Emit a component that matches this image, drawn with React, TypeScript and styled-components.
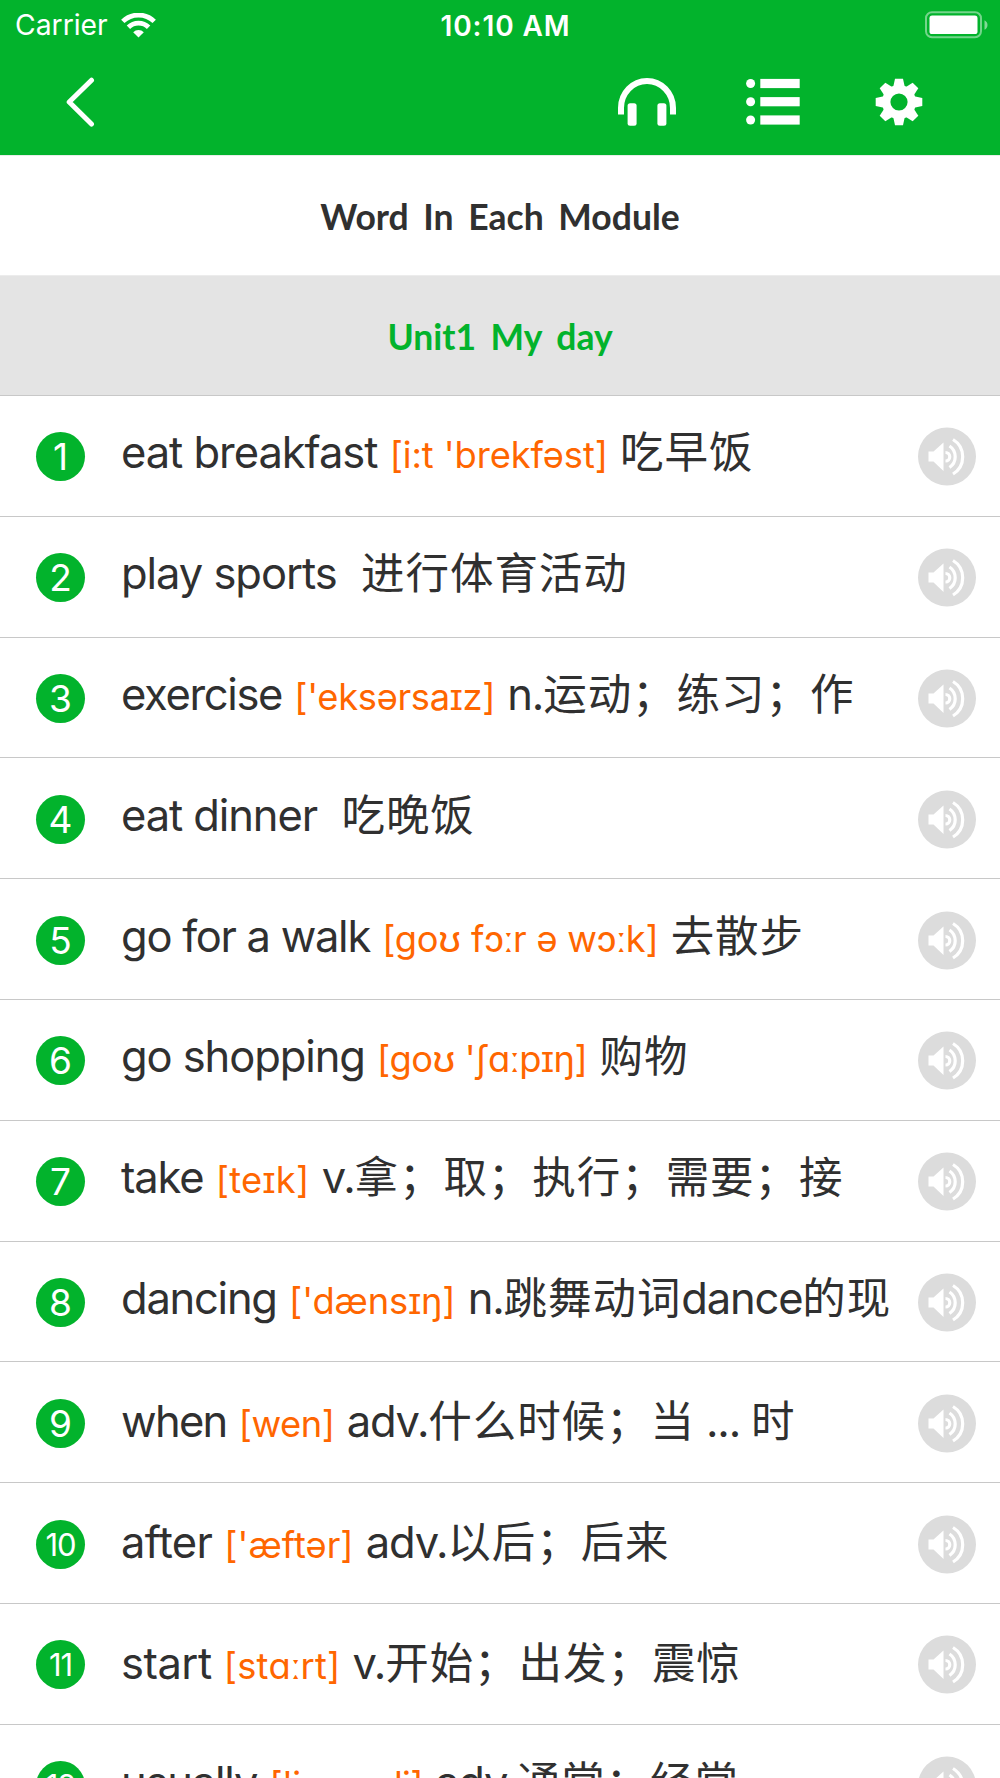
import React from 'react';
import styled, { createGlobalStyle } from 'styled-components';

interface Word {
    en: string
    enGap: number
    ipa?: string
    ipaGap?: number
    cn: string
    shift?: number
}

const words: Word[] = [
    { en: 'eat breakfast', enGap: -1.05, ipa: "[i:t 'brekfəst]", ipaGap: -0.1, cn: '吃早饭' },
    { en: 'play sports', enGap: -1.05, cn: '进行体育活动', shift: -3 },
    { en: 'exercise', enGap: -1.35, ipa: "['eksərsaɪz]", ipaGap: -0.3, cn: 'n.运动；练习；作' },
    { en: 'eat dinner', enGap: -1.1, cn: '吃晚饭', shift: -3 },
    { en: 'go for a walk', enGap: -1.28, ipa: '[goʊ fɔːr ə wɔːk]', ipaGap: -0.25, cn: '去散步' },
    { en: 'go shopping', enGap: -1.1, ipa: "[goʊ 'ʃɑːpɪŋ]", ipaGap: -0.45, cn: '购物' },
    { en: 'take', enGap: -1.15, ipa: '[teɪk]', ipaGap: 0.3, cn: 'v.拿；取；执行；需要；接' },
    { en: 'dancing', enGap: -1.25, ipa: "['dænsɪŋ]", ipaGap: -0.1, cn: 'n.跳舞动词dance的现' },
    { en: 'when', enGap: -1.7, ipa: '[wen]', ipaGap: -0.5, cn: 'adv.什么时候；当 ... 时', shift: 4 },
    { en: 'after', enGap: -0.7, ipa: "['æftər]", ipaGap: 0, cn: 'adv.以后；后来', shift: 4 },
    { en: 'start', enGap: -0.5, ipa: '[stɑːrt]', ipaGap: 0.1, cn: 'v.开始；出发；震惊', shift: 5 },
    { en: 'usually', enGap: -1.2, ipa: "['juːʒuəli]", ipaGap: -0.6, cn: 'adv.通常；经常', shift: 1 },
]

const GlobalStyle = createGlobalStyle`
  body {
    margin: 0;
    background-color: #ffffff;
    font-family: 'Inter', 'Noto Sans CJK SC', sans-serif;
    color: #303030;
  }
`

const Page = styled.div`
    width: 1000px;
    height: 1778px;
    overflow: hidden;
`

const Header = styled.div`
    height: 155px;
    background-color: #02b32c;
    color: #ffffff;
`

const StatusBar = styled.div`
    height: 50px;
    display: grid;
    grid-template-columns: 1fr auto 1fr;
    align-items: center;
    padding: 0 12px 0 15px;
    box-sizing: border-box;
    font-size: 28.3px;
`

const Carrier = styled.div`
    display: flex;
    align-items: center;
    gap: 13px;
`

const Clock = styled.div`
    font-weight: 600;
    font-size: 28px;
    letter-spacing: 0.9px;
    padding: 1px 0 0 8px;
`

const Battery = styled.svg`
    justify-self: end;
`

const NavBar = styled.div`
    height: 103px;
    display: flex;
    align-items: center;
    padding: 0 77px 0 66px;
`

const NavTools = styled.div`
    display: flex;
    align-items: center;
    gap: 69px;
    margin-left: auto;

    svg:last-child {
        margin-left: 6px;
    }
`

const Banner = styled.div<{ $unit?: boolean }>`
    height: 120px;
    display: flex;
    align-items: center;
    justify-content: center;
    box-sizing: border-box;
    border-top: 1px solid ${props => props.$unit ? '#ececec' : '#e6eee8'};
    background-color: ${props => props.$unit ? '#e4e4e4' : '#ffffff'};
    color: ${props => props.$unit ? '#02b32c' : '#303030'};
    font-family: 'Comic Sans MS', 'Chalkboard SE', 'Lato', sans-serif;
    font-size: 35.5px;
    font-weight: 700;
    letter-spacing: 0;
    word-spacing: 6px;
    padding-top: 2px;
`

const Row = styled.div`
    height: 120.8px;
    box-sizing: border-box;
    border-top: 1px solid #c8c8c8;
    display: flex;
    align-items: center;
    padding: 2px 24px 0 36px;
`

const Index = styled.div<{ $small: boolean }>`
    width: 49px;
    height: 49px;
    border-radius: 50%;
    background-color: #02b32c;
    color: #ffffff;
    display: flex;
    align-items: center;
    justify-content: center;
    font-size: ${props => props.$small ? '31px' : '37px'};
    letter-spacing: ${props => props.$small ? '-1px' : '0'};
`

const Line = styled.div<{ $shift?: number }>`
    flex: 1;
    margin-left: 36px;
    margin-top: ${props => -6 + (props.$shift || 0)}px;
    font-size: 43.5px;
    line-height: 60px;
    white-space: pre;
`

const Latin = styled.span<{ $gap: number }>`
    letter-spacing: ${props => props.$gap}px;
`

const Ipa = styled(Latin)`
    color: #ff6600;
    font-size: 36.3px;
`

const Cn = styled.span`
    letter-spacing: 0.95px;
`

const BackIcon = () => (
    <svg width="29" height="50" viewBox="0 0 29 50" fill="none" stroke="#fff" strokeWidth="5" strokeLinecap="round" strokeLinejoin="round">
        <path d="M25.5 3.2L3.2 25L25.5 47" />
    </svg>
)

const WifiIcon = () => (
    <svg width="35" height="25" viewBox="0 0 35 25" fill="none" stroke="#fff" strokeWidth="4.8">
        <path d="M1.8 8.4A22.5 22.5 0 0 1 33.2 8.4" />
        <path d="M7.4 14.2A14.4 14.4 0 0 1 27.6 14.2" />
        <path d="M17.5 24.5L12.2 19.3A7.5 7.5 0 0 1 22.8 19.3Z" fill="#fff" stroke="none" />
    </svg>
)

const BatteryIcon = () => (
    <Battery width="63" height="28" viewBox="0 0 63 28">
        <rect x="1" y="1.2" width="55" height="25" rx="6" fill="none" stroke="#fff" strokeOpacity="0.45" strokeWidth="2" />
        <rect x="4.5" y="4.6" width="48" height="18.4" rx="2.6" fill="#fff" />
        <path d="M59.5 9.2Q62.5 10.8 62.5 14T59.5 18.8Z" fill="#fff" fillOpacity="0.5" />
    </Battery>
)

const HeadphonesIcon = () => (
    <svg width="60" height="48" viewBox="0 0 60 48" fill="#fff">
        <path d="M4 36.5V30A26 27 0 0 1 56 30V36.5" fill="none" stroke="#fff" strokeWidth="6" />
        <rect x="10.6" y="25.3" width="9" height="22.4" rx="2.5" />
        <rect x="40.4" y="25.3" width="9" height="22.4" rx="2.5" />
    </svg>
)

const ListIcon = () => (
    <svg width="54" height="48" viewBox="0 0 54 48" fill="#fff">
        {[5.5, 23.7, 42].map(y => (
            <g key={y}>
                <circle cx="4.6" cy={y} r="4.5" />
                <rect x="14.3" y={y - 4.6} width="39.4" height="9.2" />
            </g>
        ))}
    </svg>
)

const GearIcon = () => (
    <svg width="48" height="48" viewBox="-24 -24 48 48">
        {[0, 45, 90, 135, 180, 225, 270, 315].map(a => (
            <path key={a} d="M-6 -14L-4 -23.3H4L6 -14Z" fill="#fff" transform={`rotate(${a})`} />
        ))}
        <circle r="12.8" fill="none" stroke="#fff" strokeWidth="8.4" />
    </svg>
)

const SpeakerIcon = () => (
    <svg width="58" height="59" viewBox="0 0 58 59" fill="none" stroke="#fff" strokeWidth="3.2">
        <circle cx="29" cy="29.5" r="29" fill="#dcdcdc" stroke="none" />
        <path d="M10.5 24.5H15.5L25.5 15.5V44L15.5 34.5H10.5Z" fill="#fff" stroke="none" />
        <path d="M27.5 25.5A4.2 4.2 0 0 1 27.5 34" />
        <path d="M31.5 19A13 13 0 0 1 31.5 40.5" />
        <path d="M35 12.5A20.2 20.2 0 0 1 35 47" />
    </svg>
)

// latin runs inside the translation are set tighter than the characters
const Translation = ({ text }: { text: string }) => (
    <Cn>
        {text.split(/([a-z. ]+)/).map((part, i) => (
            i % 2 ? <Latin key={i} $gap={-1.2}>{part}</Latin> : part
        ))}
    </Cn>
)

const App: React.FC = () => {
    return (
        <Page>
            <GlobalStyle />
            <Header>
                <StatusBar>
                    <Carrier>Carrier <WifiIcon /></Carrier>
                    <Clock>10:10 AM</Clock>
                    <BatteryIcon />
                </StatusBar>
                <NavBar>
                    <BackIcon />
                    <NavTools>
                        <HeadphonesIcon />
                        <ListIcon />
                        <GearIcon />
                    </NavTools>
                </NavBar>
            </Header>
            <Banner>Word In Each Module</Banner>
            <Banner $unit>Unit1 My day</Banner>
            {words.map((word, i) => (
                <Row key={word.en}>
                    <Index $small={i > 8}>{i + 1}</Index>
                    <Line $shift={word.shift}>
                        <Latin $gap={word.enGap}>{word.en}</Latin> {word.ipa && <Ipa $gap={word.ipaGap || 0}>{word.ipa}</Ipa>} <Translation text={word.cn} />
                    </Line>
                    <SpeakerIcon />
                </Row>
            ))}
        </Page>
    );
}

export default App;
